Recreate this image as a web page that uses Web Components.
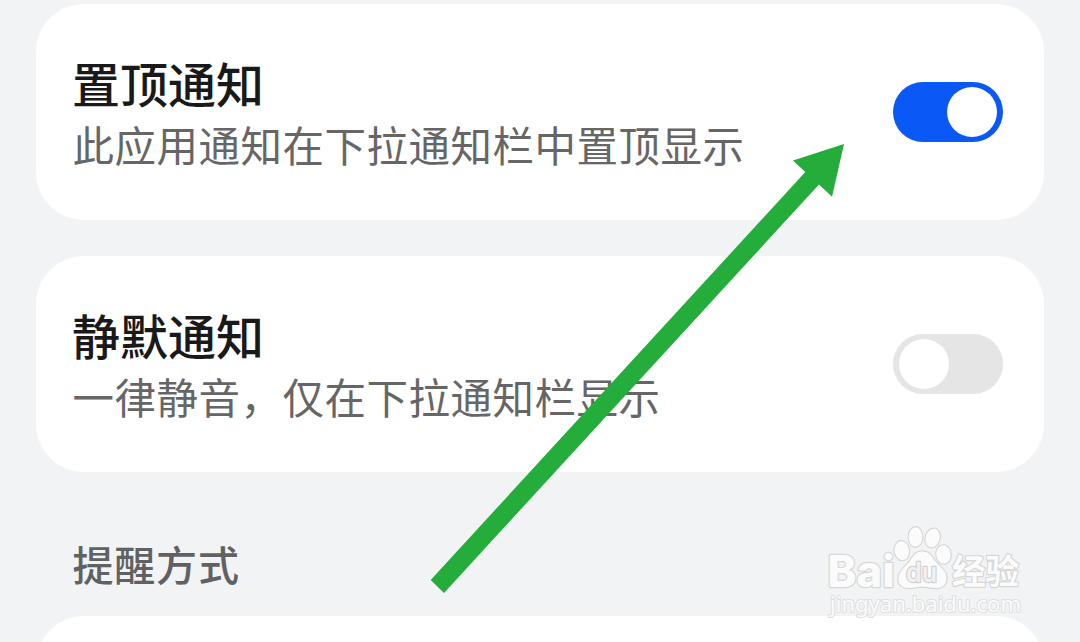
<!DOCTYPE html>
<html lang="zh-CN">
<head>
<meta charset="UTF-8">
<title>通知设置</title>
<style>
  body {
    margin: 0;
    height: 642px;
    overflow: hidden;
    background: #f1f3f5;
    font-family: "Noto Sans CJK SC", "Liberation Sans", sans-serif;
  }
</style>
</head>
<body>
<settings-page>
  <setting-card>
    <setting-row>
      置顶通知
      <span slot="summary">此应用通知在下拉通知栏中置顶显示</span>
      <toggle-switch slot="control" checked></toggle-switch>
    </setting-row>
  </setting-card>
  <setting-card>
    <setting-row>
      静默通知
      <span slot="summary">一律静音，仅在下拉通知栏显示</span>
      <toggle-switch slot="control"></toggle-switch>
    </setting-row>
  </setting-card>
  <section-title>提醒方式</section-title>
  <setting-card></setting-card>
  <pointer-arrow slot="overlay"></pointer-arrow>
  <site-watermark slot="overlay"></site-watermark>
</settings-page>

<script>
class SettingsPage extends HTMLElement {
  constructor() {
    super();
    this.attachShadow({ mode: 'open' });
    this.shadowRoot.innerHTML = `
      <style>
        :host {
          display: block;
          position: relative;
          height: 642px;
          overflow: hidden;
        }

        main {
          display: flex;
          flex-direction: column;
          gap: 36px;
          padding: 4px 36px 0;
        }
      </style>
      <main><slot></slot></main>
      <slot name="overlay"></slot>
    `;
  }
}

class SettingCard extends HTMLElement {
  constructor() {
    super();
    this.attachShadow({ mode: 'open' });
    this.shadowRoot.innerHTML = `
      <style>
        :host {
          display: flex;
          flex-direction: column;
          justify-content: center;
          flex: 0 0 auto;
          height: 216px;
          box-sizing: border-box;
          padding: 0 41px 0 36px;
          background: #fff;
          border-radius: 48px;
        }
      </style>
      <slot></slot>
    `;
  }
}

class SettingRow extends HTMLElement {
  constructor() {
    super();
    this.attachShadow({ mode: 'open' });
    this.shadowRoot.innerHTML = `
      <style>
        :host {
          display: flex;
          align-items: center;
          justify-content: space-between;
        }

        .text {
          padding-bottom: 2px;
        }

        .title {
          font-size: 48px;
          font-weight: 500;
          line-height: 66px;
          color: #191919;
        }

        .summary {
          font-size: 41.5px;
          letter-spacing: 0.5px;
          line-height: 59px;
          padding-left: 0.5px;
          color: #666;
          white-space: nowrap;
        }
      </style>
      <div class="text">
        <div class="title"><slot></slot></div>
        <div class="summary"><slot name="summary"></slot></div>
      </div>
      <slot name="control"></slot>
    `;
  }
}

class ToggleSwitch extends HTMLElement {
  constructor() {
    super();
    this.attachShadow({ mode: 'open' });
    this.shadowRoot.innerHTML = `
      <style>
        :host {
          display: flex;
          align-items: center;
          flex: 0 0 auto;
          width: 110px;
          height: 60px;
          padding: 0 6px;
          box-sizing: border-box;
          border-radius: 30px;
          background: #e5e5e5;
          cursor: pointer;
        }

        :host([checked]) {
          justify-content: flex-end;
          background: #0a59f7;
        }

        .thumb {
          width: 50px;
          height: 50px;
          border-radius: 50%;
          background: #fff;
        }
      </style>
      <div class="thumb"></div>
    `;
  }

  connectedCallback() {
    this.setAttribute('role', 'switch');
    this.updateState();
    this.addEventListener('click', () => {
      this.toggleAttribute('checked');
      this.updateState();
    });
  }

  updateState() {
    this.setAttribute('aria-checked', this.hasAttribute('checked'));
  }
}

class SectionTitle extends HTMLElement {
  constructor() {
    super();
    this.attachShadow({ mode: 'open' });
    this.shadowRoot.innerHTML = `
      <style>
        :host {
          display: block;
          height: 72px;
          box-sizing: border-box;
          padding: 25px 36.5px 0;
          font-size: 41px;
          font-weight: 500;
          letter-spacing: 0.8px;
          line-height: 60px;
          color: #606163;
        }
      </style>
      <slot></slot>
    `;
  }
}

// Green arrow laid over the cards, pointing at the first switch
class PointerArrow extends HTMLElement {
  constructor() {
    super();
    this.attachShadow({ mode: 'open' });
    this.shadowRoot.innerHTML = `
      <style>
        :host {
          position: absolute;
          left: 0;
          top: 0;
          pointer-events: none;
        }

        svg {
          display: block;
        }
      </style>
      <svg width="1080" height="642" viewBox="0 0 1080 642">
        <polygon points="844,144 793,160.5 805.3,172 430.7,580 444,593 819,184.5 832,196.7" fill="#24ad3a"></polygon>
      </svg>
    `;
  }
}

class SiteWatermark extends HTMLElement {
  constructor() {
    super();
    this.attachShadow({ mode: 'open' });
    this.shadowRoot.innerHTML = `
      <style>
        :host {
          position: absolute;
          left: 820px;
          top: 520px;
          pointer-events: none;
        }

        svg {
          display: block;
        }

        text,
        .paw {
          fill: #fbfbfb;
          stroke: #d6d7d7;
          stroke-width: 2.4px;
          stroke-linejoin: round;
          paint-order: stroke;
        }

        .brand {
          font: 800 44px Inter, "Liberation Sans", sans-serif;
        }

        .du {
          font: 600 27px Inter, "Liberation Sans", sans-serif;
          fill: #f0f0f1;
          stroke: #d0d1d2;
          stroke-width: 2.4px;
        }

        .cn {
          font: 700 34px "Noto Sans CJK SC", sans-serif;
        }

        .url {
          font: 400 22px "Noto Sans", sans-serif;
          stroke: #dedfe0;
          stroke-width: 2px;
        }
      </style>
      <svg width="220" height="110" viewBox="0 0 220 110">
        <text class="brand" x="7.5" y="67" textLength="67" lengthAdjust="spacingAndGlyphs">Bai</text>
        <g class="paw">
          <ellipse cx="81.8" cy="30.7" rx="7.2" ry="9.5" transform="rotate(-8 81.8 30.7)"></ellipse>
          <ellipse cx="95.5" cy="17" rx="6.8" ry="9.8"></ellipse>
          <ellipse cx="112.6" cy="18" rx="7" ry="9.5" transform="rotate(16 112.6 18)"></ellipse>
          <ellipse cx="123.5" cy="34.5" rx="7.2" ry="9.2" transform="rotate(-5 123.5 34.5)"></ellipse>
          <path d="M102 31.5C96 31.5 93 36 90 41C86 46 79 51 78.5 58C78 65 83 68 89 68C95 68 98 66.500 102 66.500C107 66.500 111 68.500 117 68C124 67.500 127 63 126.500 57C126 50 119 46 115 41C112 36 109 31.500 102 31.500Z"></path>
        </g>
        <text class="du" x="86" y="62" textLength="31" lengthAdjust="spacingAndGlyphs">du</text>
        <text class="cn" x="132" y="63.5" textLength="67" lengthAdjust="spacingAndGlyphs">经验</text>
        <text class="url" x="10" y="92" textLength="191" lengthAdjust="spacingAndGlyphs">jingyan.baidu.com</text>
      </svg>
    `;
  }
}

customElements.define('settings-page', SettingsPage);
customElements.define('setting-card', SettingCard);
customElements.define('setting-row', SettingRow);
customElements.define('toggle-switch', ToggleSwitch);
customElements.define('section-title', SectionTitle);
customElements.define('pointer-arrow', PointerArrow);
customElements.define('site-watermark', SiteWatermark);
</script>
</body>
</html>
